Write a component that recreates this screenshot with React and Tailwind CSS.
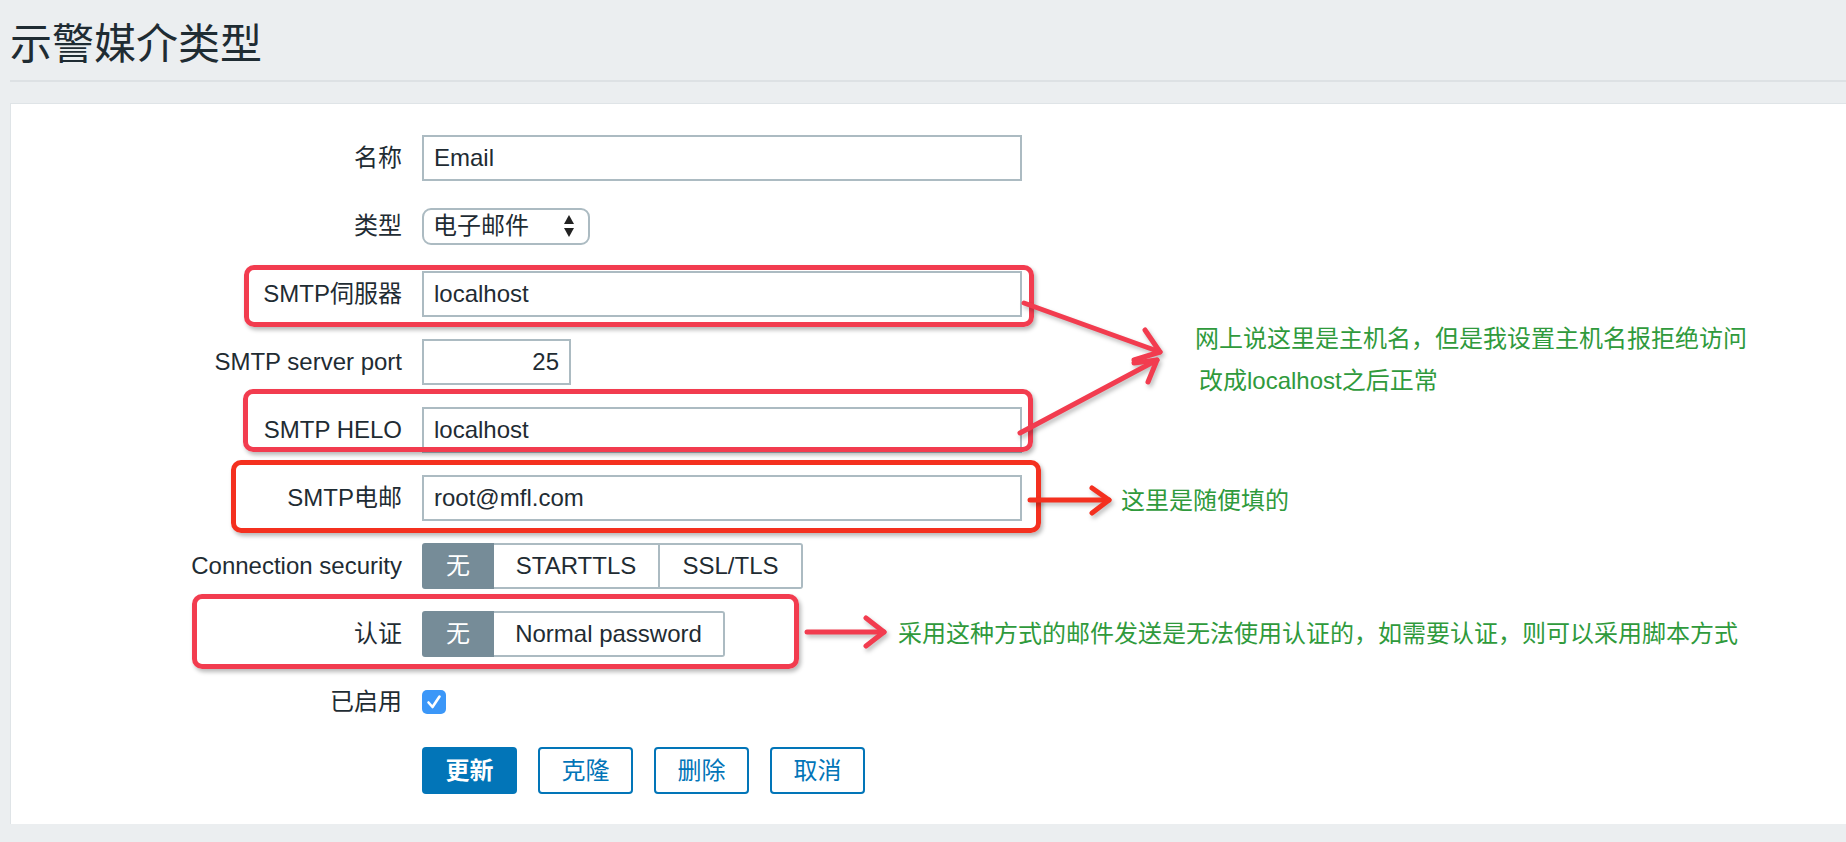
import React from 'react';

const FONT = "font-['Liberation_Sans','Noto_Sans_CJK_SC',sans-serif]";

function Row({ label, children }) {
  return (
    <div className="flex items-center h-[46px]">
      <div className="w-[391px] text-right text-[24px] text-[#1f2c33] leading-none whitespace-nowrap">{label}</div>
      <div className="ml-[20px] flex items-center">{children}</div>
    </div>
  );
}

function TextInput({ value, width = 'w-[600px]', align = 'text-left' }) {
  return (
    <div className={`${width} h-[46px] border-2 border-[#acbbc2] bg-white px-[10px] flex items-center text-[24px] text-[#1f2c33] ${align}`}>
      <span className="w-full">{value}</span>
    </div>
  );
}

function Segmented({ options }) {
  return (
    <div className="flex h-[46px] text-[24px]">
      {options.map((opt, i) => {
        const first = i === 0;
        const last = i === options.length - 1;
        return (
          <div
            key={opt.label}
            className={
              first
                ? 'w-[72px] h-full bg-[#768c98] text-white rounded-l-[3px] flex items-center justify-center'
                : `${opt.w} h-full border-y-2 border-r-2 border-[#acbbc2] text-[#1f2c33] flex items-center justify-center ${last ? 'rounded-r-[3px]' : ''}`
            }
          >
            {opt.label}
          </div>
        );
      })}
    </div>
  );
}

function RedBox({ className }) {
  return <div className={`absolute border-[5px] rounded-[10px] shadow-[2px_3px_4px_rgba(0,0,0,0.28)] pointer-events-none ${className}`} />;
}

export default function App() {
  return (
    <div className={`relative w-[1846px] h-[842px] bg-[#ebeef0] overflow-hidden ${FONT}`}>
      <div className="ml-[10px] h-[82px] border-b-2 border-[#dde1e4] pt-[24px]">
        <h1 className="text-[42px] leading-none text-[#1f2c33] font-normal">示警媒介类型</h1>
      </div>

      <div className="mt-[21px] ml-[10px] h-[721px] bg-white border-t border-l border-[#dfe4e7] pt-[31px]">
        <div className="flex flex-col gap-[22px]">
          <Row label="名称">
            <TextInput value="Email" />
          </Row>
          <Row label="类型">
            <div className="w-[168px] h-[37px] border-2 border-[#acbbc2] rounded-[9px] pl-[9px] pr-[14px] flex items-center justify-between text-[24px] text-[#1f2c33]">
              <span>电子邮件</span>
              <svg width="10" height="22" viewBox="0 0 10 22">
                <path d="M5 0 L10 9 L0 9 Z" fill="#222" />
                <path d="M0 13 L10 13 L5 22 Z" fill="#222" />
              </svg>
            </div>
          </Row>
          <Row label="SMTP伺服器">
            <TextInput value="localhost" />
          </Row>
          <Row label="SMTP server port">
            <TextInput value="25" width="w-[149px]" align="text-right" />
          </Row>
          <Row label="SMTP HELO">
            <TextInput value="localhost" />
          </Row>
          <Row label="SMTP电邮">
            <TextInput value="root@mfl.com" />
          </Row>
          <Row label="Connection security">
            <Segmented
              options={[
                { label: '无' },
                { label: 'STARTTLS', w: 'w-[166px]' },
                { label: 'SSL/TLS', w: 'w-[143px]' },
              ]}
            />
          </Row>
          <Row label="认证">
            <Segmented
              options={[
                { label: '无' },
                { label: 'Normal password', w: 'w-[231px]' },
              ]}
            />
          </Row>
          <Row label="已启用">
            <div className="w-[24px] h-[24px] rounded-[5px] bg-[#3b97f8] flex items-center justify-center">
              <svg width="24" height="24" viewBox="0 0 24 24">
                <path d="M6.5 12.5 L10.5 17 L17.5 6.5" fill="none" stroke="white" strokeWidth="2.6" strokeLinecap="round" strokeLinejoin="round" />
              </svg>
            </div>
          </Row>
          <div className="flex items-center h-[47px]">
            <div className="w-[391px]" />
            <div className="ml-[20px] flex gap-[21px] text-[24px]">
              <button className="w-[95px] h-[47px] rounded-[4px] bg-[#0275b8] text-white font-bold">更新</button>
              <button className="w-[95px] h-[47px] rounded-[4px] border-2 border-[#0275b8] text-[#0275b8] bg-white">克隆</button>
              <button className="w-[95px] h-[47px] rounded-[4px] border-2 border-[#0275b8] text-[#0275b8] bg-white">删除</button>
              <button className="w-[95px] h-[47px] rounded-[4px] border-2 border-[#0275b8] text-[#0275b8] bg-white">取消</button>
            </div>
          </div>
        </div>
      </div>

      {/* annotations */}
      <RedBox className="left-[244px] top-[265px] w-[790px] h-[62px] border-[#f23c4f]" />
      <RedBox className="left-[243px] top-[389px] w-[790px] h-[63px] border-[#f23c4f]" />
      <RedBox className="left-[231px] top-[460px] w-[810px] h-[73px] border-[#f4301f]" />
      <RedBox className="left-[192px] top-[594px] w-[607px] h-[75px] border-[#f23c4f]" />

      <svg className="absolute left-0 top-0 pointer-events-none drop-shadow-[2px_3px_2px_rgba(0,0,0,0.25)]" width="1846" height="842">
        <g fill="none" strokeLinecap="round" strokeLinejoin="round" strokeWidth="5">
          <g stroke="#f23c4f">
            <path d="M1024 303 L1160 352" />
            <path d="M1145 330 L1160 352 L1134 360" />
            <path d="M1020 433 L1157 360" />
            <path d="M1134 363 L1157 360 L1148 382" />
            <path d="M807 632 L884 632" />
            <path d="M866 618 L884 632 L866 646" />
          </g>
          <g stroke="#f4301f">
            <path d="M1030 500 L1109 500" />
            <path d="M1092 488 L1109 500 L1092 513" />
          </g>
        </g>
      </svg>

      <div className="absolute left-[1195px] top-[327px] text-[24px] leading-none text-[#2f9a3c] whitespace-nowrap">网上说这里是主机名，但是我设置主机名报拒绝访问</div>
      <div className="absolute left-[1199px] top-[369px] text-[24px] leading-none text-[#2f9a3c] whitespace-nowrap">改成localhost之后正常</div>
      <div className="absolute left-[1121px] top-[489px] text-[24px] leading-none text-[#2f9a3c] whitespace-nowrap">这里是随便填的</div>
      <div className="absolute left-[898px] top-[622px] text-[24px] leading-none text-[#2f9a3c] whitespace-nowrap">采用这种方式的邮件发送是无法使用认证的，如需要认证，则可以采用脚本方式</div>
    </div>
  );
}
